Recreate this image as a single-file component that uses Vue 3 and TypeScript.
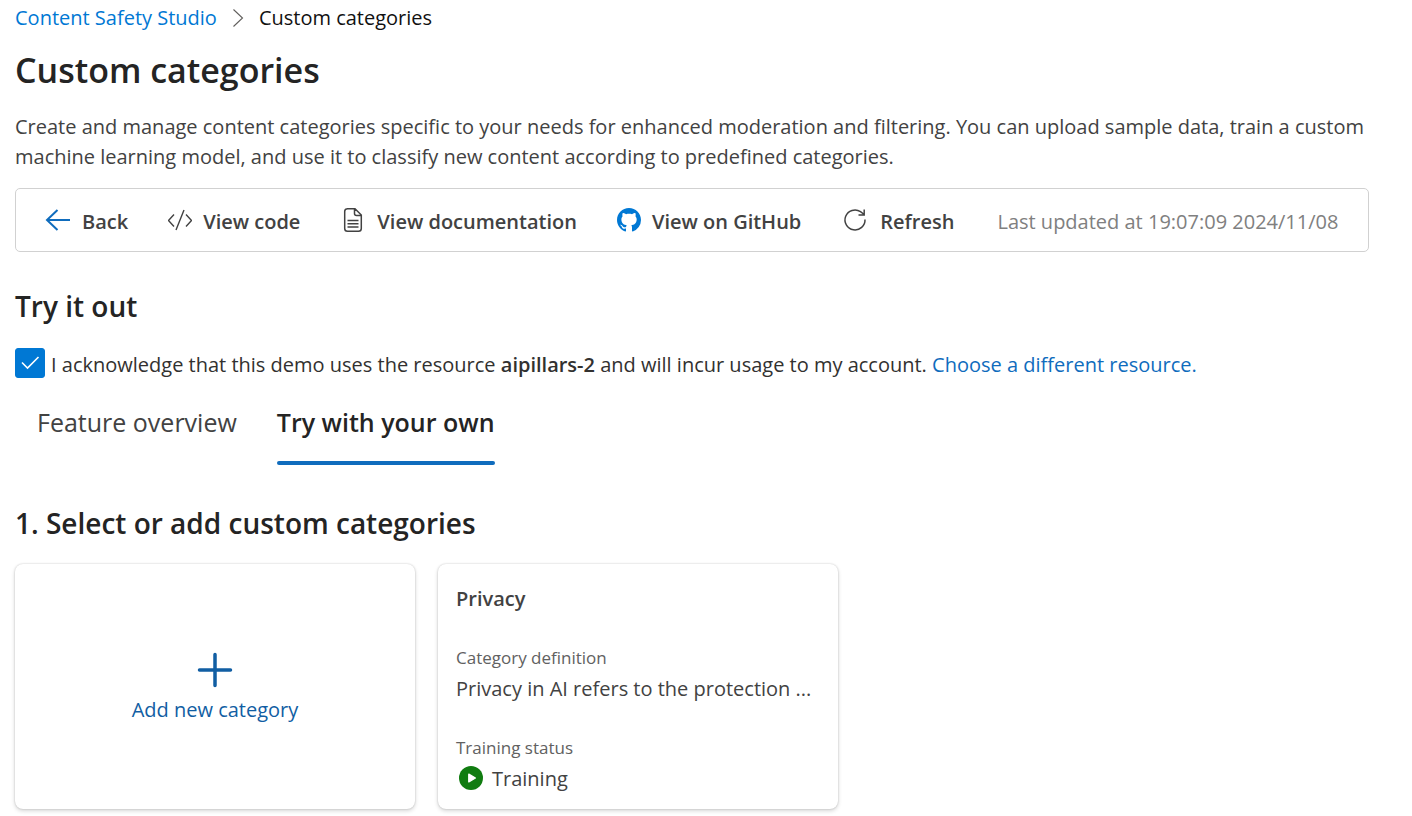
<script setup lang="ts">
import { ref } from 'vue'

interface Category {
  name: string
  definition: string
  status: string
}

const acknowledged = ref(true)
const tabs = ['Feature overview', 'Try with your own']
const activeTab = ref(tabs[1])
const lastUpdated = ref('19:07:09 2024/11/08')
const categories = ref<Category[]>([
  { name: 'Privacy', definition: 'Privacy in AI refers to the protection ...', status: 'Training' },
])
</script>

<template>
  <main class="page">
    <nav class="breadcrumb" aria-label="Breadcrumb">
      <a href="#">Content Safety Studio</a>
      <svg class="chevron" width="12" height="20" viewBox="0 0 12 20" aria-hidden="true">
        <path d="M1.500 1.500 L10.500 10 L1.500 18.500" fill="none" stroke="#605e5c" stroke-width="1.100" />
      </svg>
      <span>Custom categories</span>
    </nav>

    <h1>Custom categories</h1>
    <p class="intro">
      Create and manage content categories specific to your needs for enhanced moderation and filtering. You can upload sample data, train a custom machine learning model, and use it to classify new content according to predefined categories.
    </p>

    <div class="toolbar">
      <button type="button">
        <svg width="26" height="24" viewBox="0 0 26 24" aria-hidden="true">
          <path d="M25 12 H2 M12.500 2 L2 12 L12.500 22" fill="none" stroke="#0f6cbd" stroke-width="2" />
        </svg>
        <span class="label">Back</span>
      </button>
      <button type="button">
        <svg width="24" height="24" viewBox="1 0 24 24" aria-hidden="true">
          <path d="M7 6.500 L1.500 12.500 L7 18.500 M19 6.500 L24.500 12.500 L19 18.500 M17 2 L9 22" fill="none" stroke="#424242" stroke-width="1.400" />
        </svg>
        <span class="label">View code</span>
      </button>
      <button type="button">
        <svg width="26" height="26" viewBox="-3 0 26 26" aria-hidden="true">
          <path d="M4 1.700 H12 L18.300 8 V21.500 Q18.300 24.300 15.500 24.300 H4.500 Q1.700 24.300 1.700 21.500 V4.500 Q1.700 1.700 4.500 1.700 M11.500 1.700 V6.500 Q11.500 8.500 13.500 8.500 H18.300 M4.500 13.500 H15.500 M4.500 16.800 H15.500 M4.500 20.100 H15.500" fill="none" stroke="#424242" stroke-width="1.500" />
        </svg>
        <span class="label">View documentation</span>
      </button>
      <button type="button">
        <svg width="24" height="24" viewBox="0 0 16 16" aria-hidden="true">
          <path fill="#0078d4" d="M8 0C3.580 0 0 3.580 0 8c0 3.540 2.290 6.530 5.470 7.590.4.070.55-.17.55-.38 0-.19-.01-.82-.01-1.490-2.010.37-2.530-.49-2.690-.94-.09-.23-.48-.94-.82-1.130-.28-.15-.68-.52-.01-.53.63-.01 1.080.58 1.230.82.72 1.210 1.870.87 2.330.66.07-.52.28-.87.51-1.070-1.780-.2-3.640-.89-3.640-3.950 0-.87.31-1.590.82-2.150-.08-.2-.36-1.020.08-2.120 0 0 .67-.21 2.200.82.64-.18 1.320-.27 2-.27s1.360.09 2 .27c1.530-1.040 2.200-.82 2.200-.82.44 1.100.16 1.920.08 2.120.51.56.82 1.270.82 2.150 0 3.070-1.870 3.750-3.650 3.950.29.25.54.73.54 1.480 0 1.070-.01 1.930-.01 2.200 0 .21.15.46.55.38A8.010 8.010 0 0 0 16 8c0-4.420-3.580-8-8-8z" />
        </svg>
        <span class="label">View on GitHub</span>
      </button>
      <button type="button">
        <svg width="28" height="24" viewBox="-3 0 28 24" aria-hidden="true">
          <path d="M21 11.500 A10 10 0 1 1 16.500 3.600 L20.200 6.500 M20.200 1.500 V7 H14.500" fill="none" stroke="#424242" stroke-width="1.500" />
        </svg>
        <span class="label">Refresh</span>
      </button>
      <span class="label updated">Last updated at {{ lastUpdated }}</span>
    </div>

    <h2>Try it out</h2>
    <div class="ack">
      <input id="ack" v-model="acknowledged" type="checkbox" />
      <div class="ack-text">
        <label for="ack">I acknowledge that this demo uses the resource <strong>aipillars-2</strong> and will incur usage to my account.</label>
        {{ ' ' }}<a href="#">Choose a different resource.</a>
      </div>
    </div>

    <div class="tabs" role="tablist">
      <button
        v-for="tab in tabs"
        :key="tab"
        type="button"
        role="tab"
        :aria-selected="tab === activeTab"
        :class="{ active: tab === activeTab }"
        @click="activeTab = tab"
      >{{ tab }}</button>
    </div>

    <h2 class="step">1. Select or add custom categories</h2>
    <div class="cards">
      <button type="button" class="card add">
        <svg width="36" height="36" viewBox="0 0 36 36" aria-hidden="true">
          <path d="M18 2.500 V33.500 M2.500 18 H33.500" fill="none" stroke="#115ea3" stroke-width="3.500" stroke-linecap="round" />
        </svg>
        <span>Add new category</span>
      </button>
      <article v-for="category in categories" :key="category.name" class="card category">
        <h3>{{ category.name }}</h3>
        <dl>
          <dt>Category definition</dt>
          <dd class="definition">{{ category.definition }}</dd>
          <dt>Training status</dt>
          <dd class="status">
            <svg width="24" height="26" viewBox="0 0 24 26" aria-hidden="true">
              <circle cx="12" cy="14" r="12" fill="#107c10" />
              <path d="M9.800 10.200 L16.400 14 L9.800 17.800 Z" fill="#fff" stroke="#fff" stroke-width="1.400" stroke-linejoin="round" />
            </svg>
            {{ category.status }}
          </dd>
        </dl>
      </article>
    </div>
  </main>
</template>

<style>
body {
  margin: 0;
  background: #fff;
}
</style>

<style scoped>
.page {
  padding: 3px 43px 6px 15px;
  font-family: 'Segoe UI', 'Open Sans', 'Noto Sans', sans-serif;
  font-size: 20px;
  line-height: 30px;
  color: #323130;
}
button {
  font: inherit;
  color: inherit;
  background: none;
  border: 0;
  padding: 0;
  cursor: pointer;
}
svg {
  flex: none;
}
a {
  color: #0f6cbd;
  text-decoration: none;
}
.breadcrumb {
  display: flex;
  align-items: center;
  gap: 15px;
  color: #111;
}
.breadcrumb a {
  color: #0078d4;
}
h1,
h2,
h3,
p,
dl,
dd {
  margin: 0;
}
h1 {
  margin-top: 17px;
  font-size: 34px;
  line-height: 40px;
  font-weight: 600;
  color: #242424;
}
.intro {
  margin-top: 22px;
  color: #424242;
}
.toolbar {
  display: flex;
  align-items: center;
  margin-top: 16px;
  padding: 15px 29px;
  border: 1px solid #d1d1d1;
  border-radius: 5px;
  font-weight: 600;
  color: #424242;
  white-space: nowrap;
}
.toolbar button {
  display: flex;
  align-items: center;
  gap: 11px;
  margin-right: 40px;
}
.label {
  padding-top: 4px;
  line-height: 28px;
}
.updated {
  margin-left: 3px;
  font-weight: 400;
  color: #808080;
}
h2 {
  margin-top: 34px;
  font-size: 28px;
  line-height: 40px;
  font-weight: 600;
  color: #242424;
}
.ack {
  display: flex;
  align-items: flex-start;
  gap: 6px;
  margin-top: 22px;
}
.ack input {
  appearance: none;
  flex: none;
  width: 30px;
  height: 30px;
  margin: 0;
  border: 1px solid #0078d4;
  border-radius: 3px;
}
.ack input:checked {
  background: #0078d4 url("data:image/svg+xml,%3Csvg xmlns='http://www.w3.org/2000/svg' viewBox='0 0 28 28'%3E%3Cpath d='M6 13.500 L11.500 19 L22.500 8' fill='none' stroke='white' stroke-width='1.600'/%3E%3C/svg%3E") center / 28px 28px no-repeat;
}
.ack-text {
  padding-top: 2px;
}
.ack strong {
  font-weight: 600;
}
.tabs {
  display: flex;
  gap: 40px;
  margin-top: 10px;
  padding-left: 22px;
}
.tabs button {
  position: relative;
  padding: 12px 0 23px;
  font-size: 25px;
  line-height: 40px;
  color: #424242;
}
.tabs .active {
  font-weight: 600;
  color: #242424;
}
.tabs .active::after {
  content: '';
  position: absolute;
  left: 0;
  right: 0;
  bottom: 0;
  height: 4px;
  border-radius: 2px;
  background: #0f6cbd;
}
h2.step {
  margin-top: 38px;
}
.cards {
  display: grid;
  grid-template-columns: repeat(auto-fill, minmax(0, 400px));
  gap: 23px;
  margin-top: 21px;
}
.card {
  border-radius: 8px;
  background: #fff;
  box-shadow: 0 0 2px rgba(0, 0, 0, 0.2), 0 2px 4px rgba(0, 0, 0, 0.16);
}
.add {
  display: flex;
  flex-direction: column;
  align-items: center;
  justify-content: center;
  gap: 7px;
  padding-top: 3px;
  color: #115ea3;
}
.category {
  padding: 20px 18px 15px;
  color: #424242;
}
h3 {
  font-size: 20px;
  line-height: 30px;
  font-weight: 600;
}
dt {
  margin-top: 30px;
  font-size: 17px;
  line-height: 28px;
  color: #616161;
}
dd {
  padding-top: 2px;
}
.definition {
  overflow: hidden;
  text-overflow: ellipsis;
  white-space: nowrap;
}
.status {
  display: flex;
  align-items: flex-start;
  gap: 9px;
  padding-left: 3px;
}
.status svg {
  display: block;
}
</style>
